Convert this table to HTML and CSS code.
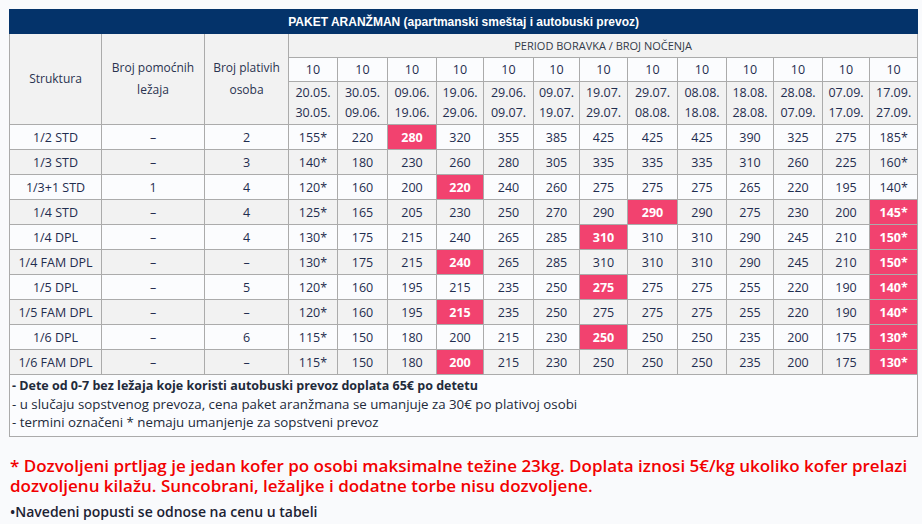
FILE: index.html
```html
<!DOCTYPE html>
<html lang="sr">
<head>
<meta charset="utf-8">
<title>Paket aranžman</title>
<link rel="stylesheet" href="styles.css">
</head>
<body>
<div class="page">
<table class="price">
<colgroup>
<col style="width:92px"><col style="width:103px"><col style="width:84px">
<col style="width:49px"><col style="width:50px"><col style="width:49px"><col style="width:47px"><col style="width:50px"><col style="width:46px"><col style="width:48px"><col style="width:50px"><col style="width:49px"><col style="width:47px"><col style="width:49px"><col style="width:47px"><col style="width:48px">
</colgroup>
<thead>
<tr class="title"><th colspan="16">PAKET ARANŽMAN (apartmanski smeštaj i autobuski prevoz)</th></tr>
<tr class="period">
<th rowspan="3" class="lbl">Struktura</th>
<th rowspan="3" class="lbl">Broj pomoćnih<br>ležaja</th>
<th rowspan="3" class="lbl">Broj plativih<br>osoba</th>
<th colspan="13">PERIOD BORAVKA / BROJ NOČENJA</th>
</tr>
<tr class="nights">
<td>10</td><td>10</td><td>10</td><td>10</td><td>10</td><td>10</td><td>10</td><td>10</td><td>10</td><td>10</td><td>10</td><td>10</td><td>10</td>
</tr>
<tr class="dates">
<td>20.05.<br>30.05.</td><td>30.05.<br>09.06.</td><td>09.06.<br>19.06.</td><td>19.06.<br>29.06.</td><td>29.06.<br>09.07.</td><td>09.07.<br>19.07.</td><td>19.07.<br>29.07.</td><td>29.07.<br>08.08.</td><td>08.08.<br>18.08.</td><td>18.08.<br>28.08.</td><td>28.08.<br>07.09.</td><td>07.09.<br>17.09.</td><td>17.09.<br>27.09.</td>
</tr>
</thead>
<tbody>
<tr><td>1/2 STD</td><td>–</td><td>2</td><td>155*</td><td>220</td><td class="hl">280</td><td>320</td><td>355</td><td>385</td><td>425</td><td>425</td><td>425</td><td>390</td><td>325</td><td>275</td><td>185*</td></tr>
<tr><td>1/3 STD</td><td>–</td><td>3</td><td>140*</td><td>180</td><td>230</td><td>260</td><td>280</td><td>305</td><td>335</td><td>335</td><td>335</td><td>310</td><td>260</td><td>225</td><td>160*</td></tr>
<tr><td>1/3+1 STD</td><td>1</td><td>4</td><td>120*</td><td>160</td><td>200</td><td class="hl">220</td><td>240</td><td>260</td><td>275</td><td>275</td><td>275</td><td>265</td><td>220</td><td>195</td><td>140*</td></tr>
<tr><td>1/4 STD</td><td>–</td><td>4</td><td>125*</td><td>165</td><td>205</td><td>230</td><td>250</td><td>270</td><td>290</td><td class="hl">290</td><td>290</td><td>275</td><td>230</td><td>200</td><td class="hl">145*</td></tr>
<tr><td>1/4 DPL</td><td>–</td><td>4</td><td>130*</td><td>175</td><td>215</td><td>240</td><td>265</td><td>285</td><td class="hl">310</td><td>310</td><td>310</td><td>290</td><td>245</td><td>210</td><td class="hl">150*</td></tr>
<tr><td>1/4 FAM DPL</td><td>–</td><td>–</td><td>130*</td><td>175</td><td>215</td><td class="hl">240</td><td>265</td><td>285</td><td>310</td><td>310</td><td>310</td><td>290</td><td>245</td><td>210</td><td class="hl">150*</td></tr>
<tr><td>1/5 DPL</td><td>–</td><td>5</td><td>120*</td><td>160</td><td>195</td><td>215</td><td>235</td><td>250</td><td class="hl">275</td><td>275</td><td>275</td><td>255</td><td>220</td><td>190</td><td class="hl">140*</td></tr>
<tr><td>1/5 FAM DPL</td><td>–</td><td>–</td><td>120*</td><td>160</td><td>195</td><td class="hl">215</td><td>235</td><td>250</td><td>275</td><td>275</td><td>275</td><td>255</td><td>220</td><td>190</td><td class="hl">140*</td></tr>
<tr><td>1/6 DPL</td><td>–</td><td>6</td><td>115*</td><td>150</td><td>180</td><td>200</td><td>215</td><td>230</td><td class="hl">250</td><td>250</td><td>250</td><td>235</td><td>200</td><td>175</td><td class="hl">130*</td></tr>
<tr><td>1/6 FAM DPL</td><td>–</td><td>–</td><td>115*</td><td>150</td><td>180</td><td class="hl">200</td><td>215</td><td>230</td><td>250</td><td>250</td><td>250</td><td>235</td><td>200</td><td>175</td><td class="hl">130*</td></tr>
<tr class="notes"><td colspan="16">
<p class="b">- Dete od 0-7 bez ležaja koje koristi autobuski prevoz doplata 65€ po detetu</p>
<p>- u slučaju sopstvenog prevoza, cena paket aranžmana se umanjuje za 30€ po plativoj osobi</p>
<p>- termini označeni * nemaju umanjenje za sopstveni prevoz</p>
</td></tr>
</tbody>
</table>
<p class="warn">* Dozvoljeni prtljag je jedan kofer po osobi maksimalne težine 23kg. Doplata iznosi 5€/kg ukoliko kofer prelazi dozvoljenu kilažu. Suncobrani, ležaljke i dodatne torbe nisu dozvoljene.</p>
<p class="disc">•Navedeni popusti se odnose na cenu u tabeli</p>
</div>
</body>
</html>
```

FILE: styles.css
```css
html, body {
  margin: 0;
  padding: 0;
  background: #f9fafc;
}
body {
  font-family: "Open Sans", "DejaVu Sans", sans-serif;
  color: #1f2d4f;
}
.page {
  padding: 9px 5px 0 9px;
}
.price {
  border-collapse: collapse;
  table-layout: fixed;
  width: 908px;
  font-size: 12.5px;
}
.price th, .price td {
  border: 1px solid #ababab;
  text-align: center;
  padding: 0;
  font-weight: 400;
}
.title th {
  background: #04336a;
  color: #fff;
  font-family: "Liberation Sans", Arial, sans-serif;
  font-weight: 700;
  font-size: 12px;
  height: 23px;
  border-color: #04336a;
}
.period th {
  background: #f2f2f2;
  color: #333a48;
  height: 23px;
}
.period th[colspan] {
  font-size: 11px;
}
.period .lbl {
  font-size: 12px;
  line-height: 22px;
  color: #2a3350;
}
.nights td {
  background: #fbfcfe;
  height: 23px;
}
.dates td {
  background: #f2f2f2;
  height: 42px;
  line-height: 20px;
}
tbody tr td {
  height: 24px;
  background: #fbfcfe;
}
tbody tr:nth-child(even) td {
  background: #f2f2f2;
}
tbody td.hl, tbody tr:nth-child(even) td.hl {
  background: #f2426f;
  color: #fff;
  font-weight: 700;
}
.notes td {
  background: #fbfcfe;
  text-align: left;
  padding: 2px 2px 5px;
  height: auto;
  font-size: 13.3px;
  color: #222a3a;
}
.notes p {
  margin: 0;
  line-height: 18px;
}
.notes .b {
  font-weight: 700;
  font-size: 12.5px;
}
.warn {
  margin: 19px 0 0 1px;
  color: #f20000;
  font-size: 17px;
  line-height: 20px;
  font-weight: 600;
}
.disc {
  margin: 7px 0 0 1px;
  font-size: 14px;
  line-height: 18px;
  font-weight: 600;
  color: #1c2233;
}
```
